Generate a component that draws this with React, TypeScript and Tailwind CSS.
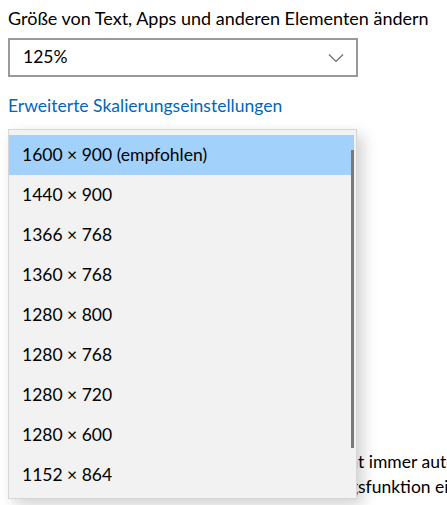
const resolutions = [
  '1600 × 900 (empfohlen)',
  '1440 × 900',
  '1366 × 768',
  '1360 × 768',
  '1280 × 800',
  '1280 × 768',
  '1280 × 720',
  '1280 × 600',
  '1152 × 864',
]

function Chevron() {
  return (
    <svg width="16" height="10" viewBox="0 0 16 10" fill="none" stroke="#6b6b6b" strokeWidth="1.2">
      <path d="M1 1.5 L8 8.5 L15 1.5" />
    </svg>
  )
}

export default function App() {
  return (
    <div
      className="relative h-[505px] w-[447px] overflow-hidden bg-white text-[#000]"
      style={{ fontFamily: 'Lato, "Noto Sans", sans-serif' }}
    >
      <div className="flex flex-col pl-2 pt-[5px]">
        <p className="text-[18px] leading-[26px] whitespace-nowrap">Größe von Text, Apps und anderen Elementen ändern</p>
        <div className="mt-[7px] flex h-[39px] w-[350px] items-center justify-between border-2 border-[#999999] pl-[13px] pr-[12px]">
          <span className="text-[17.5px]">125%</span>
          <Chevron />
        </div>
        <a className="mt-[16px] text-[17.5px] leading-[26px] text-[#0067b8]">Erweiterte Skalierungseinstellungen</a>
        <div className="mt-[330px] flex flex-col text-[17.5px] leading-[25px] whitespace-nowrap">
          <p className="flex">
            <span className="flex w-[350px] shrink-0 justify-end overflow-hidden">Ältere Bildschirme werden möglicherweise nich</span>
            <span>t immer automatisch</span>
          </p>
          <p className="flex">
            <span className="flex w-[350px] shrink-0 justify-end overflow-hidden">verbunden. Wählen Sie die Erkennung</span>
            <span>sfunktion ein, um sie</span>
          </p>
          <p>herzustellen.</p>
        </div>
      </div>

      <div className="absolute left-2 top-[129px] w-[349px] border border-[#d6d6d6] bg-[#f2f2f2] pt-[5px] pb-[3px] shadow-[6px_6px_14px_rgba(0,0,0,0.18)]">
        <div className="relative">
          {resolutions.map((r, i) => (
            <div
              key={r}
              className={
                'flex h-[40px] items-center pl-[13px] text-[17.5px] ' + (i === 0 ? 'bg-[#a2d2fb] mr-[2px]' : '')
              }
            >
              {r}
            </div>
          ))}
          <div className="absolute right-[2px] top-[15px] h-[298px] w-[3px] bg-[#7a7a7a]" />
        </div>
      </div>
    </div>
  )
}
